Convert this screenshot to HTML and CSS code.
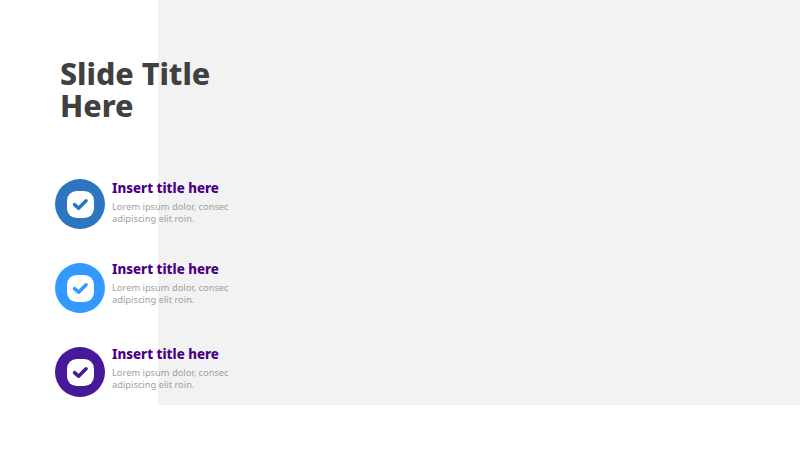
FILE: index.html
```html
<!DOCTYPE html>
<html lang="en">
<head>
<meta charset="utf-8">
<title>Slide Title Here</title>
<link rel="stylesheet" href="styles.css">
</head>
<body>
<main class="slide">
  <h1 class="title">Slide Title<br>Here</h1>
  <ul class="items">
    <li class="item item-a">
      <span class="badge"><svg class="icon" viewBox="0 0 28 28"><rect width="28" height="28" rx="10" fill="#fff"/><path class="tick" d="M7.8 14.1l4.2 3.8 7.8-7.7"/></svg></span>
      <div class="copy"><h2 class="item-title">Insert title here</h2><p class="item-text">Lorem ipsum dolor, consec<br>adipiscing elit roin.</p></div>
    </li>
    <li class="item item-b">
      <span class="badge"><svg class="icon" viewBox="0 0 28 28"><rect width="28" height="28" rx="10" fill="#fff"/><path class="tick" d="M7.8 14.1l4.2 3.8 7.8-7.7"/></svg></span>
      <div class="copy"><h2 class="item-title">Insert title here</h2><p class="item-text">Lorem ipsum dolor, consec<br>adipiscing elit roin.</p></div>
    </li>
    <li class="item item-c">
      <span class="badge"><svg class="icon" viewBox="0 0 28 28"><rect width="28" height="28" rx="10" fill="#fff"/><path class="tick" d="M7.8 14.1l4.2 3.8 7.8-7.7"/></svg></span>
      <div class="copy"><h2 class="item-title">Insert title here</h2><p class="item-text">Lorem ipsum dolor, consec<br>adipiscing elit roin.</p></div>
    </li>
  </ul>
</main>
</body>
</html>
```
FILE: styles.css
```css
html, body { margin: 0; padding: 0; }
body { background: #fff; overflow: hidden; }
.slide {
  width: 800px;
  height: 450px;
  box-sizing: border-box;
  padding: 58px 0 0 55px;
  background: linear-gradient(#f2f2f2, #f2f2f2) no-repeat 158px 0 / 642px 405px;
  font-family: "Noto Sans", "DejaVu Sans", sans-serif;
}
.title {
  margin: 0 0 0 5px;
  font-size: 30.4px;
  line-height: 32px;
  font-weight: 800;
  color: #404040;
}
.items {
  list-style: none;
  margin: 57px 0 0;
  padding: 0;
  display: flex;
  flex-direction: column;
}
.item { display: flex; align-items: flex-start; gap: 7px; height: 84px; }
.badge {
  width: 50px;
  height: 50px;
  border-radius: 50%;
  display: flex;
  align-items: center;
  justify-content: center;
  flex: none;
}
.icon { width: 27px; height: 27px; display: block; }
.tick { fill: none; stroke-width: 3.6; stroke-linecap: round; stroke-linejoin: round; }
.item-a .badge { background: #2e75c0; }
.item-a .tick { stroke: #2e75c0; }
.item-b .badge { background: #3399ff; }
.item-b .tick { stroke: #3399ff; }
.item-c .badge { background: #46189a; }
.item-c .tick { stroke: #46189a; }
.copy { padding-top: 1px; }
.item-b .copy { margin-top: -3px; }
.item-c .copy { margin-top: -2px; }
.item-title {
  margin: 0;
  font-size: 13.3px;
  line-height: 17px;
  font-weight: 800;
  color: #4b0082;
}
.item-text {
  margin: 4px 0 0;
  font-size: 9.3px;
  line-height: 12px;
  color: #a0a0a0;
}
```
